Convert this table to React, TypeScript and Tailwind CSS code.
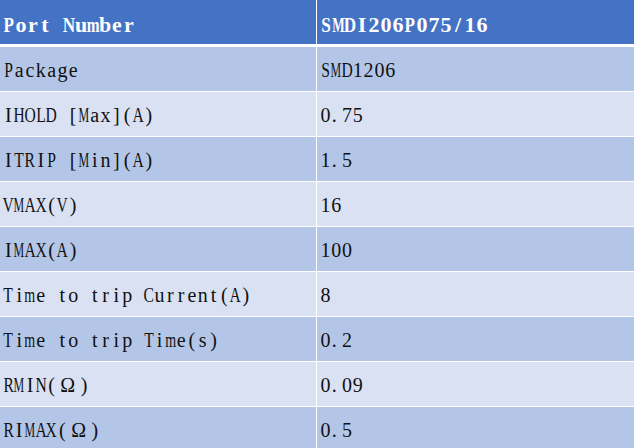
const rows: [string, string][] = [
  ['Package', 'SMD1206'],
  ['IHOLD [Max](A)', '0.75'],
  ['ITRIP [Min](A)', '1.5'],
  ['VMAX(V)', '16'],
  ['IMAX(A)', '100'],
  ['Time to trip Current(A)', '8'],
  ['Time to trip Time(s)', '0.2'],
  ['RMIN(Ω)', '0.09'],
  ['RIMAX(Ω)', '0.5'],
];

// squeeze factors so serif glyphs fit a monospace cell (SimSun look)
const squeezeFor = (ch: string) => {
  if ('MW'.includes(ch)) return 'scale-x-[0.6]';
  if ('mw'.includes(ch)) return 'scale-x-[0.7]';
  if ('ABCDEFGHKLNOPQRSTUVXYZ'.includes(ch)) return 'scale-x-[0.78]';
  return '';
};

const Mono = ({ text, header }: { text: string, header?: boolean }) => (
  <>
    {text.split('').map((ch, i) => {
      const cell = ch === 'Ω'
        ? (header ? 'w-[24px]' : 'w-[21.6px]')
        : (header ? 'w-[12px]' : 'w-[10.8px]');
      const align = ch === '.' ? 'justify-start pl-[1px]' : 'justify-center';
      return (
        <span key={i} className={`inline-flex whitespace-pre ${cell} ${align}`}>
          <span className={`inline-block ${squeezeFor(ch)}`}>{ch}</span>
        </span>
      );
    })}
  </>
);

const App = () => {
  return (
    <div className="w-[634px] h-[448px] overflow-hidden bg-white font-['Liberation_Serif',serif] text-[#111]">
      <div className="flex flex-col gap-px">
        <div className="grid grid-cols-[316px_1fr] gap-x-px mb-[2px]">
          <div className="h-[44px] pt-[14px] pl-[3px] bg-[#4472C4] text-white font-bold text-[22px] leading-[22px] whitespace-nowrap">
            <Mono text="Port Number" header />
          </div>
          <div className="h-[44px] pt-[14px] pl-[3px] bg-[#4472C4] text-white font-bold text-[22px] leading-[22px] whitespace-nowrap">
            <Mono text="SMDI206P075/16" header />
          </div>
        </div>
        {rows.map(([label, value], i) => {
          const bg = i % 2 === 0 ? 'bg-[#B4C6E7]' : 'bg-[#D9E1F2]';
          return (
            <div key={label} className="grid grid-cols-[316px_1fr] gap-x-px text-[20px] leading-[20px]">
              <div className={`h-[44px] pt-[13px] pl-[3px] whitespace-nowrap ${bg}`}>
                <Mono text={label} />
              </div>
              <div className={`h-[44px] pt-[13px] pl-[3px] whitespace-nowrap ${bg}`}>
                <Mono text={value} />
              </div>
            </div>
          );
        })}
      </div>
    </div>
  );
};

export default App;
